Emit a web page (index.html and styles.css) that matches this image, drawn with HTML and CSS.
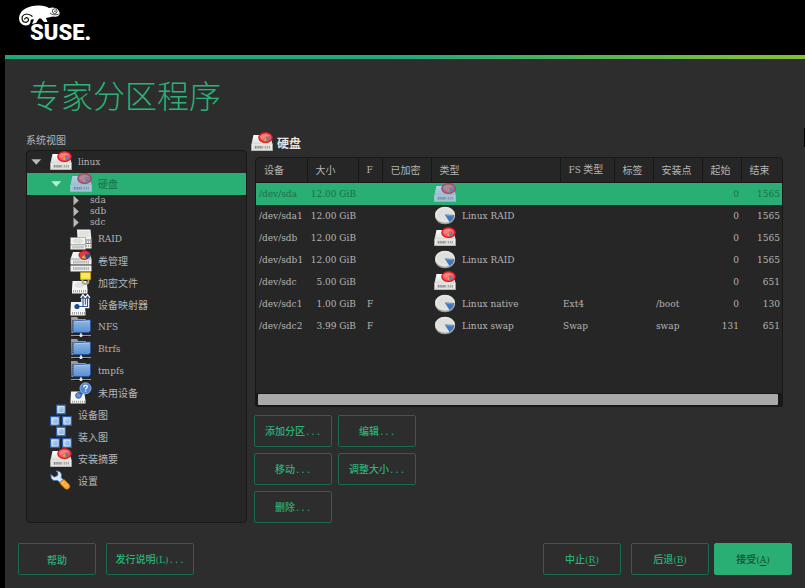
FILE: index.html
```html
<!DOCTYPE html>
<html lang="zh-CN">
<head>
<meta charset="utf-8">
<title>专家分区程序</title>
<meta name="viewport" content="width=device-width, initial-scale=1">
<link rel="stylesheet" href="styles.css">
</head>
<body>
<svg class="sprite" aria-hidden="true">
  <defs>
    <linearGradient id="g-case" x1="0" y1="0" x2="0" y2="1"><stop offset="0" stop-color="#fff"/><stop offset="1" stop-color="#dcdcda"/></linearGradient>
    <linearGradient id="g-blue" x1="0" y1="0" x2="0" y2="1"><stop offset="0" stop-color="#93b8e4"/><stop offset="1" stop-color="#5a8fd0"/></linearGradient>
    <linearGradient id="g-box" x1="0" y1="0" x2="1" y2="1"><stop offset="0" stop-color="#d2e2f6"/><stop offset="1" stop-color="#6f9dd8"/></linearGradient>
  </defs>
  <symbol id="disk" viewBox="0 0 22 22">
    <path d="M2.500 3H19L21.500 12H.5Z" fill="url(#g-case)"/>
    <path d="M.4 12H21.600V18.800H.4Z" fill="#efefed"/>
    <path d="M.4 12H21.600" stroke="#cfcfcb" stroke-width=".6"/>
    <path d="M.4 18.300H21.600" stroke="#b5b5b1"/>
    <path d="M2.500 13.500H19.500V16.800H2.500Z" fill="#cfcfcb"/>
    <path d="M4 15.200H12" stroke="#8a8a86" stroke-width="2.400" stroke-dasharray="1 .6"/>
    <path d="M14 15.200H19" stroke="#a8a8a4" stroke-width="2.400" stroke-dasharray="1 1"/>
    <ellipse cx="14.500" cy="5.600" rx="6.700" ry="4.900" fill="#f25555" stroke="#d8161c" stroke-width="1.200"/>
    <path d="M9 4.300Q14 -.2 19.500 3.800Q14 4.300 12 7.500Q9.500 6.500 9 4.300Z" fill="#ff9c9c" opacity=".6"/>
    <path d="M15.500 6.200L19.500 6.700Q18.500 8.800 16 8.800Z" fill="#4f80c4"/>
    <path d="M14.700 5.200L15.200 9L12.500 8.200Z" fill="#d8b045"/>
    <path d="M15.300 5L17.300 3.700L19 5.700Z" fill="#8f78bb"/>
    <path d="M15 5.500L16.300 8.500L15 9Z" fill="#5cad54"/>
  </symbol>
  <symbol id="disk-active" viewBox="0 0 22 22">
    <use href="#disk"/>
    <path d="M2.500 3L8 3Q10 -.5 15 .2Q20 .5 21.600 5Q21.500 8 20.500 9L21.600 12V18.800H.4V12Z" fill="#4b93c8" opacity=".42"/>
  </symbol>
  <symbol id="raid" viewBox="0 0 22 22">
    <path d="M7 1.500H20.500L21.500 12V20.500H8Z" fill="#efefed"/>
    <path d="M9 3H19.500V9H9Z" fill="#e2e2df"/><path d="M15 12H21.500M15 15.500H21.500" stroke="#777"/>
    <path d="M16 13.800H21M16 18H21" stroke="#aaa" stroke-dasharray="1 1" stroke-width="2"/>
    <path d="M.5 9.500H15.500V21.500H.5Z" fill="#f5f5f3" stroke="#8d8d89" stroke-width=".6"/>
    <ellipse cx="8" cy="13" rx="5.500" ry="2.600" fill="#dededa"/>
    <path d="M1 16.800H15" stroke="#999"/><path d="M2.500 19.300H14" stroke="#9a9a96" stroke-width="2.500" stroke-dasharray="1 1"/>
  </symbol>
  <symbol id="lvm" viewBox="0 0 22 22">
    <path d="M3 2H19L21.500 9V14H.5V9Z" fill="#f3f3f1"/>
    <path d="M.5 9H21.500M.5 14.700H21.500" stroke="#9b9b98"/>
    <path d="M.5 15.500H21.500V21.500H.5Z" fill="#eee"/>
    <path d="M3 12H19M3 18.500H19" stroke="#b3b3af" stroke-width="3" stroke-dasharray="1.500 .6"/>
    <ellipse cx="14.500" cy="5" rx="5.500" ry="4.300" fill="#e33a3a" stroke="#b11217"/>
    <path d="M14.500 4.800L20 3.800Q21 7.800 16.500 8.800Z" fill="#27539e"/><path d="M14.500 4.800L16 9.100L11.500 7.800Z" fill="#e9bf32"/>
    <path d="M14.500 4.800V8.800H16Z" fill="#4ba34b"/>
  </symbol>
  <symbol id="crypt" viewBox="0 0 22 22">
    <path d="M2.500 9H16.500L17.500 17V21.500H2V17Z" fill="#f4f4f2"/>
    <ellipse cx="9.500" cy="13" rx="5" ry="3" fill="#e1e1dd"/>
    <path d="M3 19.300H17" stroke="#a2a29e" stroke-width="2.500" stroke-dasharray="1 1"/>
    <path d="M12.500 7V9A3 3 0 0 0 18.500 9V7" fill="none" stroke="#a8a899" stroke-width="1.800"/>
    <path d="M10.500.5H20.500V7.500H10.500Z" fill="#ffe324" stroke="#d6ae05" stroke-width=".7"/><path d="M11 2.500H20M11 4.500H20" stroke="#fff6a0" stroke-width=".7"/>
  </symbol>
  <symbol id="mapper" viewBox="0 0 22 22">
    <path d="M1 8H14L15.500 17V21.500H.5V17Z" fill="#f4f4f2"/>
    <path d="M2 19.300H15" stroke="#a2a29e" stroke-width="2.500" stroke-dasharray="1 1"/>
    <path d="M7 12.500H13V3M13 12.500H17.500V3M11.500 4.500L13 2.500L14.500 4.500M16 4.500L17.500 2.500L19 4.500" fill="none" stroke="#fff" stroke-width="3.600"/>
    <path d="M7 12.500H13V3M13 12.500H17.500V3M11.500 4.500L13 2.500L14.500 4.500M16 4.500L17.500 2.500L19 4.500" fill="none" stroke="#27569d" stroke-width="1.200"/>
    <circle cx="7" cy="12.500" r="2.600" fill="#1d4c97"/>
  </symbol>
  <symbol id="netfolder" viewBox="0 0 22 22">
    <path d="M1 1H7L8.500 3H16V7H4V17H1.500Z" fill="#9c9c98"/><path d="M2.500 4V16" stroke="#555" stroke-dasharray="1 1"/>
    <path d="M3 5L20.500 4V15L18.500 16.500H3Z" fill="url(#g-blue)" stroke="#2455a0" stroke-width=".9"/>
    <path d="M4 5.800L19.500 4.800" stroke="#c5dcf5" stroke-width=".7"/>
    <path d="M1 19.500H21" stroke="#999" stroke-width="1"/><path d="M4 20.500H18" stroke="#111"/>
    <path d="M11 17V18.500" stroke="#ccc" stroke-width="1.500"/><circle cx="11" cy="19.500" r="1.600" fill="#eee"/>
  </symbol>
  <symbol id="unused" viewBox="0 0 22 22">
    <path d="M1 9.500H14L15.500 18V21.500H.5V18Z" fill="#f4f4f2"/>
    <path d="M2 19.800H15" stroke="#a2a29e" stroke-width="2" stroke-dasharray="1 1"/>
    <path d="M12 10L9 13" stroke="#3d6fb5" stroke-width="4.500"/><circle cx="8.500" cy="13.500" r="2.800" fill="#6795d3" stroke="#2b5aa2"/>
    <circle cx="15.500" cy="6.300" r="5.500" fill="#5687ca" stroke="#8db2e3"/>
    <path d="M13.700 5.300Q13.800 3.200 15.700 3.300Q17.700 3.500 17.200 5.300Q16.800 6.200 15.700 6.700V7.600M15.700 8.600V9.700" fill="none" stroke="#fff" stroke-width="1.200"/>
  </symbol>
  <symbol id="graph" viewBox="0 0 22 22">
    <g fill="url(#g-box)" stroke="#2a5fae" stroke-width="1.200"><path d="M6.600 1.100H15.400V9.900H6.600Z"/><path d="M.6 12.600H9.400V21.400H.6Z"/><path d="M12.600 12.600H21.400V21.400H12.600Z"/></g>
    <g fill="none" stroke="#e6effa" stroke-width=".7"><path d="M8 2.500H14V8.500H8Z"/><path d="M2 14H8V20H2Z"/><path d="M14 14H20V20H14Z"/></g>
  </symbol>
  <symbol id="tools" viewBox="0 0 22 22">
    <path d="M13 12.500L16.800 16.300" stroke="#de6f0a" stroke-width="6.500" stroke-linecap="round"/>
    <path d="M13 12.500L16.800 16.300" stroke="#ffab2c" stroke-width="4.800" stroke-linecap="round"/>
    <path d="M12 14L14.500 11.500M14.500 16.500L17 14" stroke="#ffdc88" stroke-width="1"/>
    <path d="M6 1Q10.500.5 11.500 4.500L11.300 7.500L13 9.500L10 12.500L7.500 10.500Q3 11.500 1.200 8.500L.8 4.500L4.500 7L7.500 5.500L8 3Z" fill="#dbe8f8" stroke="#3f6fb2" stroke-width=".9"/>
  </symbol>
  <symbol id="part" viewBox="0 0 22 22">
    <ellipse cx="11" cy="11.500" rx="10" ry="7.800" fill="#a3a39f"/>
    <ellipse cx="11" cy="9.700" rx="10" ry="8" fill="#dfdfdb"/>
    <ellipse cx="11" cy="9.500" rx="8.800" ry="6.800" fill="none" stroke="#ececea"/>
    <path d="M11.300 9.800L20 10.300Q19.500 15 15.500 16.600Z" fill="#3f78c2" stroke="#2758a2" stroke-width=".5"/>
    <path d="M12.500 10.400L19 10.800" stroke="#7fa9de" stroke-width=".8"/>
  </symbol>
</svg>

<header class="brand">
  <svg class="logo" viewBox="0 0 80 40" role="img" aria-label="SUSE">
    <path d="M14 20L16 15.500Q12.500 14.500 12.500 17Q12.500 21.500 7.500 21.500Q1 20.500 1 14Q1.500 7.500 7.500 4.500Q13 1.500 20 1.500Q27 1.200 31 4Q36 2.500 39.500 5Q42 7.500 41.500 10.500Q40 13.500 35 12.500L28 14L29.500 18H26L23 14.500H21L18 19Z" fill="#fff"/>
    <path d="M14.500 12.500Q8 7.500 4.200 12.500Q3.300 18.300 8 18.300Q11.500 17.300 10 14.300Q7.500 12.700 6.500 15.500" fill="none" stroke="#000" stroke-width="1.200"/>
    <circle cx="36.700" cy="7.200" r="2.400" fill="none" stroke="#000" stroke-width=".7"/><circle cx="37" cy="7.200" r=".7"/>
    <path d="M32 9Q35 11.800 40.500 10.300" fill="none" stroke="#000" stroke-width=".7"/>
    <text class="logo-text" x="12" y="36">SUSE.</text>
  </svg>
</header>

<main class="panel">
  <h1>专家分区程序</h1>
  <div class="columns">
    <nav class="side" aria-labelledby="view-label">
      <div class="side-label" id="view-label">系统视图</div>
      <ul class="tree">
        <li class="row"><button class="toggle open" aria-label="linux"></button><svg class="icon"><use href="#disk"/></svg><span class="latin">linux</span></li>
        <li class="row sub selected"><button class="toggle open" aria-label="硬盘"></button><svg class="icon"><use href="#disk-active"/></svg><span>硬盘</span></li>
        <li class="row leaf"><button class="toggle" aria-label="sda"></button><span class="latin">sda</span></li>
        <li class="row leaf"><button class="toggle" aria-label="sdb"></button><span class="latin">sdb</span></li>
        <li class="row leaf"><button class="toggle" aria-label="sdc"></button><span class="latin">sdc</span></li>
        <li class="row item"><svg class="icon"><use href="#raid"/></svg><span class="latin">RAID</span></li>
        <li class="row item"><svg class="icon"><use href="#lvm"/></svg><span>卷管理</span></li>
        <li class="row item"><svg class="icon"><use href="#crypt"/></svg><span>加密文件</span></li>
        <li class="row item"><svg class="icon"><use href="#mapper"/></svg><span>设备映射器</span></li>
        <li class="row item"><svg class="icon"><use href="#netfolder"/></svg><span class="latin">NFS</span></li>
        <li class="row item"><svg class="icon"><use href="#netfolder"/></svg><span class="latin">Btrfs</span></li>
        <li class="row item"><svg class="icon"><use href="#netfolder"/></svg><span class="latin">tmpfs</span></li>
        <li class="row item"><svg class="icon"><use href="#unused"/></svg><span>未用设备</span></li>
        <li class="row top"><svg class="icon"><use href="#graph"/></svg><span>设备图</span></li>
        <li class="row top"><svg class="icon"><use href="#graph"/></svg><span>装入图</span></li>
        <li class="row top"><svg class="icon"><use href="#disk"/></svg><span>安装摘要</span></li>
        <li class="row top"><svg class="icon"><use href="#tools"/></svg><span>设置</span></li>
      </ul>
    </nav>

    <section class="content">
      <h2><svg class="icon"><use href="#disk"/></svg>硬盘</h2>
      <div class="grid-box">
        <div class="grid-body">
          <table>
            <colgroup><col class="c-dev"><col class="c-dev"><col class="c-f"><col class="c-mid"><col class="c-type"><col class="c-fs"><col class="c-small"><col class="c-mid"><col class="c-small"><col class="c-end"></colgroup>
            <thead>
              <tr><th>设备</th><th>大小</th><th><span class="latin">F</span></th><th>已加密</th><th>类型</th><th><span class="latin">FS</span> 类型</th><th>标签</th><th>安装点</th><th>起始</th><th>结束</th></tr>
            </thead>
            <tbody>
              <tr class="selected"><td>/dev/sda</td><td class="num">12.00 GiB</td><td></td><td></td><td><span class="kind"><svg class="icon"><use href="#disk-active"/></svg></span></td><td></td><td></td><td></td><td class="num">0</td><td class="num">1565</td></tr>
              <tr><td>/dev/sda1</td><td class="num">12.00 GiB</td><td></td><td></td><td><span class="kind"><svg class="icon"><use href="#part"/></svg>Linux RAID</span></td><td></td><td></td><td></td><td class="num">0</td><td class="num">1565</td></tr>
              <tr><td>/dev/sdb</td><td class="num">12.00 GiB</td><td></td><td></td><td><span class="kind"><svg class="icon"><use href="#disk"/></svg></span></td><td></td><td></td><td></td><td class="num">0</td><td class="num">1565</td></tr>
              <tr><td>/dev/sdb1</td><td class="num">12.00 GiB</td><td></td><td></td><td><span class="kind"><svg class="icon"><use href="#part"/></svg>Linux RAID</span></td><td></td><td></td><td></td><td class="num">0</td><td class="num">1565</td></tr>
              <tr><td>/dev/sdc</td><td class="num">5.00 GiB</td><td></td><td></td><td><span class="kind"><svg class="icon"><use href="#disk"/></svg></span></td><td></td><td></td><td></td><td class="num">0</td><td class="num">651</td></tr>
              <tr><td>/dev/sdc1</td><td class="num">1.00 GiB</td><td class="flag">F</td><td></td><td><span class="kind"><svg class="icon"><use href="#part"/></svg>Linux native</span></td><td>Ext4</td><td></td><td>/boot</td><td class="num">0</td><td class="num">130</td></tr>
              <tr><td>/dev/sdc2</td><td class="num">3.99 GiB</td><td class="flag">F</td><td></td><td><span class="kind"><svg class="icon"><use href="#part"/></svg>Linux swap</span></td><td>Swap</td><td></td><td>swap</td><td class="num">131</td><td class="num">651</td></tr>
            </tbody>
          </table>
        </div>
        <div class="hscroll"><div class="thumb"></div></div>
      </div>
      <div class="actions">
        <button class="btn">添加分区<span class="mono">...</span></button>
        <button class="btn">编辑<span class="mono">...</span></button>
        <button class="btn">移动<span class="mono">...</span></button>
        <button class="btn">调整大小<span class="mono">...</span></button>
        <button class="btn">删除<span class="mono">...</span></button>
      </div>
    </section>
  </div>

  <footer class="footer">
    <button class="btn">帮助</button>
    <button class="btn wide">发行说明<span class="key">(L)</span><span class="mono">...</span></button>
    <span class="spacer"></span>
    <button class="btn">中止<span class="key">(<u>R</u>)</span></button>
    <button class="btn">后退<span class="key">(<u>B</u>)</span></button>
    <button class="btn primary">接受<span class="key">(<u>A</u>)</span></button>
  </footer>
</main>
</body>
</html>
```
FILE: styles.css
```css
* { box-sizing: border-box; }

body {
  margin: 0;
  min-height: 100vh;
  display: flex;
  flex-direction: column;
  background: #000;
  color: #b4b4b4;
  font: 10px/14px "Noto Sans CJK SC", sans-serif;
}

.sprite { position: absolute; width: 0; height: 0; }
.latin, td { font-family: "DejaVu Serif", serif; font-size: 9px; }
.mono { font-family: "Liberation Mono", monospace; font-size: 9px; }
.key { font-family: "DejaVu Serif", serif; font-size: 9px; }
.icon { width: 22px; height: 22px; flex: none; display: block; }

.brand { height: 55px; padding: 4px 0 0 18px; }
.logo { width: 80px; height: 40px; display: block; overflow: visible; }
.logo-text { font: 900 22px Roboto, sans-serif; fill: #fff; }

.panel {
  position: relative;
  flex: 1;
  display: flex;
  flex-direction: column;
  margin: 0 0 1px 5px;
  padding: 12px 13px 13px;
  border-top: 4px solid;
  border-image: linear-gradient(90deg, #1fa77c 0%, #21a97a 50%, #6dbb45 85%, #86c034 100%) 1;
  background: #2d2d2d;
}
.panel::after {
  content: "";
  position: absolute;
  top: 69px;
  right: 0;
  width: 1px;
  height: 19px;
  background: #000;
}

h1 {
  margin: 0 11px;
  color: #2bb277;
  font-size: 32px;
  font-weight: 300;
  line-height: 46px;
}

.columns { flex: 1; display: flex; gap: 4px; margin-top: 13px; }
.side { width: 221px; margin-left: 8px; display: flex; flex-direction: column; }
.side-label { height: 20px; padding-top: 3px; }

.tree {
  flex: 1;
  margin: 0;
  padding: 0;
  list-style: none;
  background: #262626;
  border: 1px solid #181818;
  border-radius: 4px;
}
.row { display: flex; align-items: center; height: 22px; gap: 6px; padding-left: 3px; }
.sub { padding-left: 23px; }
.leaf { height: 11px; line-height: 11px; padding-left: 43px; }
.item { padding-left: 43px; }
.top { padding-left: 23px; }

.toggle {
  width: 14px;
  height: 11px;
  padding: 0;
  border: 0;
  background: #b8b8b8;
  clip-path: polygon(25% 5%, 63% 50%, 25% 95%);
}
.toggle.open { clip-path: polygon(10% 25%, 80% 25%, 45% 75%); }

.selected { background: #29ae74; color: #1d6f4d; }
.selected .toggle { background: #b9f0d5; }

.content { flex: 1; min-width: 0; }
h2 {
  display: flex;
  align-items: center;
  gap: 4px;
  height: 26px;
  margin: 0 0 1px;
  color: #e4e4e4;
  font-size: 12px;
}

.grid-box {
  margin: 0 9px 0 4px;
  border: 1px solid #181818;
  border-radius: 4px 4px 2px 2px;
  background: #262626;
}
.grid-body { height: 235px; overflow: hidden; }
table { width: 100%; table-layout: fixed; border-collapse: collapse; }
.c-dev { width: 51px; }
.c-f { width: 24px; }
.c-mid { width: 49px; }
.c-fs { width: 54px; }
.c-small { width: 39px; }
.c-end { width: 41px; }
th {
  height: 24px;
  padding: 0 8px;
  border-right: 1px solid #181818;
  border-bottom: 1px solid #181818;
  font-weight: 400;
  text-align: left;
  white-space: nowrap;
}
th:last-child { border-right: 0; }
td { height: 22px; padding: 0 3px; white-space: nowrap; }
.num { text-align: right; padding-right: 2px; }
.flag { padding-left: 9px; }
.kind { display: flex; align-items: center; gap: 6px; }
.hscroll { height: 13px; padding: 1px 4px 1px 2px; background: #181818; }
.thumb { height: 11px; background: #a9a9a9; border-radius: 1px; }

.actions {
  display: grid;
  grid-template-columns: 78px 78px;
  gap: 6px;
  margin: 8px 3px 0;
}
.btn {
  min-width: 78px;
  height: 32px;
  padding: 1px 8px 0;
  border: 1px solid #186b4c;
  border-radius: 2px;
  background: transparent;
  color: #2bb277;
  font: 500 10px/14px "Noto Sans CJK SC", sans-serif;
  white-space: nowrap;
}
.btn u { text-underline-offset: 2px; }

.footer { display: flex; gap: 10px; margin-top: 20px; }
.wide { min-width: 88px; }
.spacer { flex: 1; }
.primary {
  margin-left: -5px;
  border-color: #29ae74;
  background: #29ae74;
  color: #174c36;
}
```
